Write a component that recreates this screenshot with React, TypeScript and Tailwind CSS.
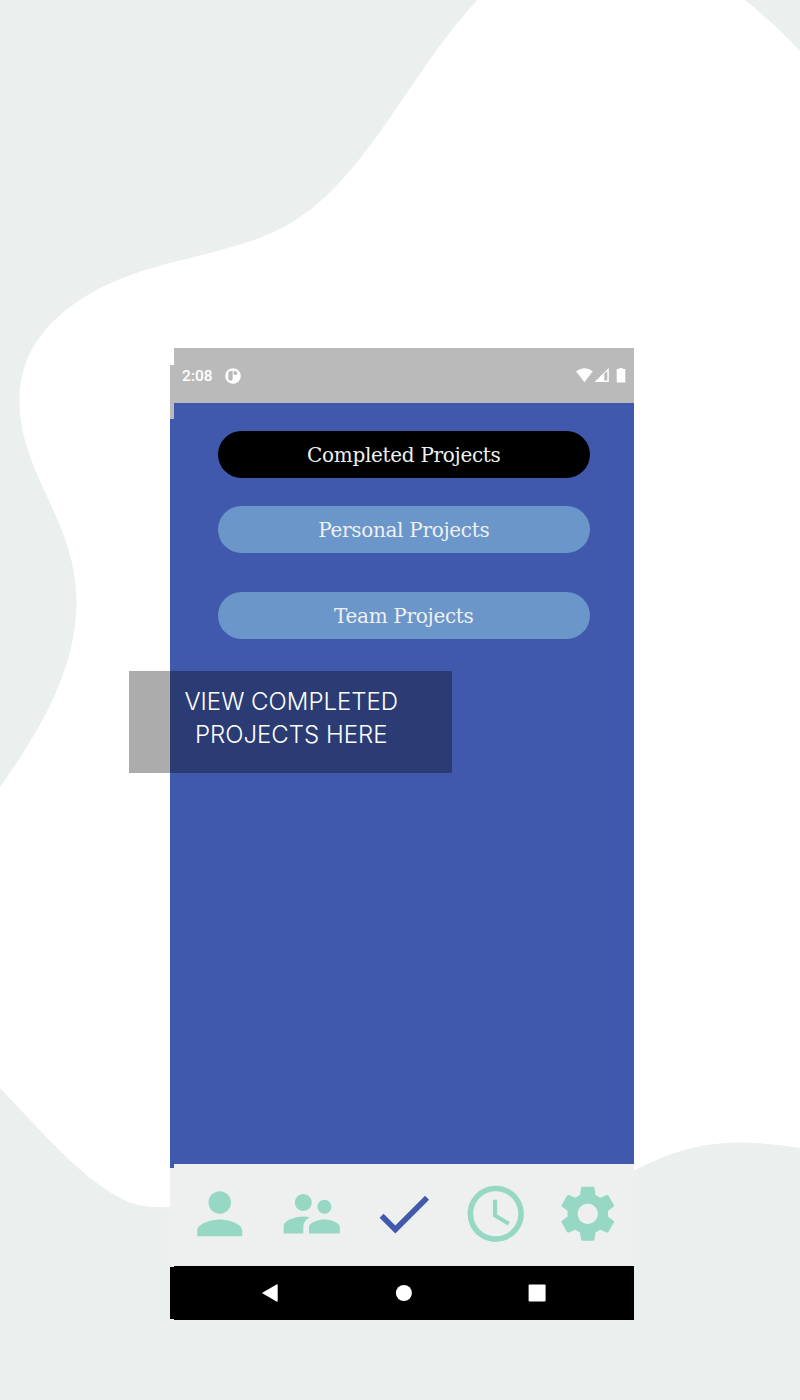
import { MdPerson, MdSupervisorAccount, MdCheck, MdAccessTime, MdSettings } from "react-icons/md";

function Backdrop() {
  return (
    <svg className="absolute inset-0 h-[1400px] w-[800px]" viewBox="0 0 800 1400">
      <path
        fill="#fff"
        d="M477.5 0C411 70 367 178 291 223C237 255 161 257 100 288C50 315 19.5 350 19.5 400C19.5 475 76.5 520 76.5 602C76.5 670 39 732 0 787V1088C50 1140 105 1207 154 1207C250 1207 500 1240 634 1170.5C690 1142 730 1137 800 1148V51Q776 25 745 0Z"
      />
    </svg>
  );
}

function StatusBar() {
  return (
    <div className="flex h-[55px] items-center bg-[#bababa] pl-[8.5px] pr-[8px] text-white">
      <span className="pt-[2px] font-[Roboto] text-[15.5px] font-medium leading-none">2:08</span>
      <svg className="ml-[12.5px] h-4 w-4" viewBox="0 0 16 16">
        <circle cx="8" cy="8" r="7.8" fill="#fff" />
        <path d="M3.3 5Q3.3 3 5.3 3H7.7V10.5Q7.7 12.8 5.5 12.8Q3.3 12.8 3.3 10.5Z" fill="#bababa" />
        <circle cx="10.3" cy="5" r="1.9" fill="#bababa" />
      </svg>
      <div className="flex-1" />
      <svg className="h-[17px] w-[50px]" viewBox="0 0 50 17">
        <path d="M0 4.2Q8.3-1.7 16.8 4.2L8.4 15.2Z" fill="#fff" />
        <path d="M32.8 1V15H18.5Z" fill="#fff" />
        <path d="M28.3 6.5L31.3 4V13.5H28.3Z" fill="#bababa" />
        <path d="M41.3 2H43V1H46.7V2H49.3V15.5H40.7V2Z" fill="#fff" />
      </svg>
    </div>
  );
}

function Pill({ label, className }: { label: string; className: string }) {
  return (
    <button className={`flex h-[47px] w-[371.5px] items-center justify-center rounded-full pt-px font-['DejaVu_Serif'] text-[20px] tracking-[-0.3px] text-[#eef0ef] ${className}`}>
      {label}
    </button>
  );
}

const tabs = [MdPerson, MdSupervisorAccount, MdCheck, MdAccessTime, MdSettings];

export default function App() {
  return (
    <main className="relative h-[1400px] w-[800px] overflow-hidden bg-[#ebefee]">
      <Backdrop />
      <div className="relative ml-[170px] mt-[348px] flex h-[972px] w-[464px]">
        <div className="flex w-[3.6px] flex-col pt-[17px]">
          <div className="h-[54px] bg-[#bababa]" />
          <div className="h-[749px] bg-[#4059ad]" />
          <div className="h-[99px] bg-[#eef0ef]" />
          <div className="h-[52px] bg-black" />
        </div>
        <div className="flex flex-1 flex-col">
          <StatusBar />
          <section className="flex h-[761px] flex-col items-center bg-[#4059ad] pt-[28px]">
            <Pill label="Completed Projects" className="bg-black" />
            <Pill label="Personal Projects" className="mt-[28px] bg-[#6b96ca]" />
            <Pill label="Team Projects" className="mt-[39px] bg-[#6b96ca]" />
          </section>
          <nav className="grid h-[102px] grid-cols-5 justify-items-center bg-[#eef0ef] pt-[15.5px]">
            {tabs.map((Icon, i) => (
              <Icon key={i} className={i === 2 ? "size-[67.5px] text-[#4059ad]" : "size-[67.5px] text-[#97d8c4]"} />
            ))}
          </nav>
          <div className="flex h-[54px] items-center bg-black">
            <svg className="h-[54px] w-full" viewBox="0 0 460 54" fill="#fff">
              <path d="M87.7 27L102.7 18.2Q103.5 18 103.5 19V35Q103.5 36 102.7 35.8Z" />
              <circle cx="229.7" cy="27" r="8" />
              <rect x="354.4" y="18.5" width="17" height="17" rx="1" />
            </svg>
          </div>
        </div>
      </div>
      <div className="absolute left-[129px] top-[671px] h-[102px] w-[322.5px] bg-black/[0.325] pl-[2px] pt-[14px] text-center font-['Inter'] text-[24px] font-light leading-[33px] text-white">
        <div>VIEW COMPLETED</div>
        <div>PROJECTS HERE</div>
      </div>
    </main>
  );
}
